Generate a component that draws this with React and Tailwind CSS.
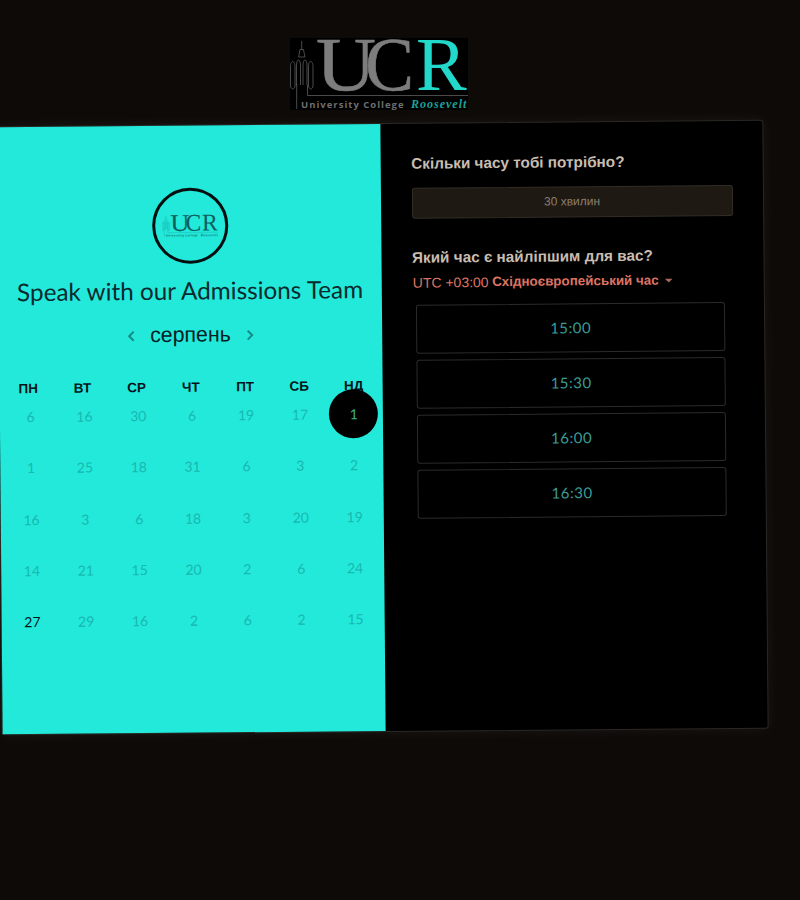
import React from "react";

const serif = { fontFamily: "'Liberation Serif', serif" };

function Logo({ className, mark, line, accent, sub, subAccent, bg }) {
  return (
    <svg viewBox="0 0 178 72" className={className} overflow="hidden">
      {bg && <rect x="0" y="0" width="178" height="72" fill={bg} />}
      <g fill="none" stroke={line} strokeWidth="0.7">
        <path d="M11.700 3V11M10 11.500h3.400M10 11.500L8.600 19M13.400 11.500L15 19M8.600 19h6.400" />
        <path d="M0.500 48V29c0-4 1.200-5.500 2.200-5.500S5 25 5 29v19c0 1.500-1.300 3-2.200 3S0.500 49.500 0.500 48z" />
        <path d="M6.500 47V27c0-3 1-5 2-5s2 2 2 5v20" />
        <path d="M13 47V27c0-3 1-5 2-5s2 2 2 5v20" />
        <path d="M18.500 48V29c0-4 1.200-5.500 2.200-5.500S23 25 23 29v19c0 1.500-1.300 3-2.200 3s-2.300-1.500-2.300-3z" />
        <path d="M6.700 46V71" />
        <path d="M17.500 47V57.500H178" />
      </g>
      <g style={serif} fontSize="76">
        <text x="26" y="52" fill={mark} stroke={mark} strokeWidth="0.6" textLength="60" lengthAdjust="spacingAndGlyphs">U</text>
        <text x="75" y="52" fill={mark} stroke={mark} strokeWidth="0.6" textLength="49" lengthAdjust="spacingAndGlyphs">C</text>
        <text x="126" y="52" fill={accent}>R</text>
      </g>
      <text x="11" y="70" fill={sub} fontSize="9.500" fontWeight="700" letterSpacing="1" style={{ fontFamily: "'Open Sans', sans-serif" }}>University College</text>
      <text x="121" y="70" fill={subAccent} fontSize="12" fontWeight="700" fontStyle="italic" letterSpacing="1" style={serif}>Roosevelt</text>
    </svg>
  );
}

const days = [
  [6, 16, 30, 6, 19, 17, 1],
  [1, 25, 18, 31, 6, 3, 2],
  [16, 3, 6, 18, 3, 20, 19],
  [14, 21, 15, 20, 2, 6, 24],
  [27, 29, 16, 2, 6, 2, 15],
];
const weekdays = ["пн", "вт", "ср", "чт", "пт", "сб", "нд"];
const times = ["15:00", "15:30", "16:00", "16:30"];

export default function App() {
  return (
    <div className="w-[800px] h-[900px] overflow-hidden bg-[#0d0a07] pt-[38px]" style={{ fontFamily: "'Liberation Sans', sans-serif" }}>
      <Logo className="block w-[178px] h-[72px] ml-[290px]" mark="#7d7d7d" line="#6a6a6a" accent="#22d8cb" sub="#6e6e6e" subAccent="#1aa39b" bg="#000000" />
      <div className="flex w-[767px] h-[609px] mt-[13px] -ml-px rotate-[-0.5deg] rounded-[3px] border border-[#2b2824] bg-black shadow-[0_0_14px_rgba(255,255,255,0.06)]">
        <section className="flex flex-col items-center w-[382.500px] shrink-0 h-full bg-[#23e9db] pt-[61.500px]">
          <div className="flex items-center justify-center w-[76px] h-[76px] ml-[2px] rounded-full border-[3px] border-[#050f10]">
            <Logo className="block w-[56px] h-[24px]" mark="#0d5f60" line="#0d7f7a" accent="#0d5f60" sub="#0d7f7a" subAccent="#0d7f7a" />
          </div>
          <h1 className="mt-[11.500px] text-[24.300px] leading-[32px] font-normal text-[#0b2a2e] whitespace-nowrap" style={{ fontFamily: "Lato, sans-serif" }}>Speak with our Admissions Team</h1>
          <div className="flex items-center gap-[15px] mt-[13.500px] h-[30px]">
            <svg width="8" height="12" viewBox="0 0 8 12" fill="none" stroke="#168a86" strokeWidth="2"><path d="M6.500 1.500L2 6l4.500 4.500" /></svg>
            <span className="text-[21.300px] text-[#06201f]">серпень</span>
            <svg width="8" height="12" viewBox="0 0 8 12" fill="none" stroke="#168a86" strokeWidth="2"><path d="M1.500 1.500L6 6l-4.500 4.500" /></svg>
          </div>
          <div className="grid grid-cols-7 w-[379.500px] mt-[27.500px]">
            {weekdays.map((d) => (
              <div key={d} className="h-[20px] flex items-center justify-center text-[13.500px] font-bold uppercase text-[#06141a]">{d}</div>
            ))}
          </div>
          <div className="relative grid grid-cols-7 w-[377px] -mt-[8px] ml-[2px]" style={{ fontFamily: "Lato, sans-serif" }}>
            {days.flat().map((d, i) => {
              const selected = i === 6;
              const active = i === 28;
              return (
                <div key={i} className="h-[51.250px] flex items-center justify-center">
                  <span className={`flex items-center justify-center w-[49px] h-[49px] rounded-full text-[14px] ${selected ? "bg-black text-[#3ab58f]" : active ? "text-[#06141a]" : "text-[#17b8ae]"}`}>{d}</span>
                </div>
              );
            })}
          </div>
        </section>
        <section className="flex-1 min-w-0 pt-[31px] pl-[31px] pr-[30px]">
          <h2 className="text-[15.300px] leading-[18px] font-bold text-[#c8bdb0] whitespace-nowrap">Скільки часу тобі потрібно?</h2>
          <div className="mt-[14.500px] flex items-center justify-center w-[321px] h-[31px] rounded-[3px] border border-[#332d26] bg-[#1e1913] text-[12px] text-[#8c8071]">30 хвилин</div>
          <h2 className="mt-[30.500px] text-[15.300px] leading-[18px] font-bold text-[#c8bdb0] whitespace-nowrap">Який час є найліпшим для вас?</h2>
          <div className="flex items-center mt-[7px] h-[18px] ml-[0.500px] text-[#dd7462] whitespace-nowrap">
            <span className="text-[14px]">UTC +03:00</span>
            <span className="ml-[3.500px] text-[13.400px] font-bold">Східноєвропейський час</span>
            <svg className="ml-[6px]" width="8" height="4" viewBox="0 0 8 4"><path d="M0 0h8L4 4z" fill="#a86a5c" /></svg>
          </div>
          <div className="flex flex-col gap-[6px] mt-[13px] ml-[3.500px] w-[309px]">
            {times.map((t) => (
              <div key={t} className="flex items-center justify-center h-[49px] rounded-[3px] border border-[#2b2b2b] text-[15px] tracking-[0.5px] text-[#3a9d96]" style={{ fontFamily: "Lato, sans-serif" }}>{t}</div>
            ))}
          </div>
        </section>
      </div>
    </div>
  );
}
